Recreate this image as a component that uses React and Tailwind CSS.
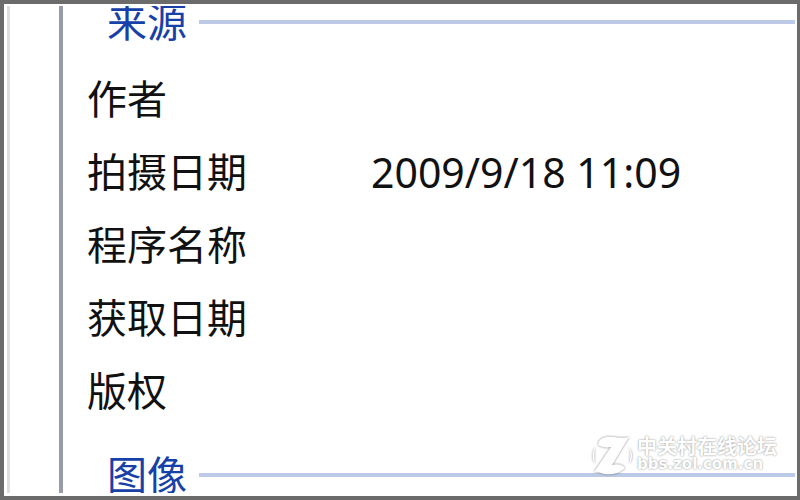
import React from 'react';

const rows = [
    { label: '作者', value: '' },
    { label: '拍摄日期', value: '2009/9/18 11:09' },
    { label: '程序名称', value: '' },
    { label: '获取日期', value: '' },
    { label: '版权', value: '' },
];

const SectionHeader = ({ title }) => (
    <div className="flex items-center gap-3 pl-11">
        <h2 className="pb-1 text-[40px] leading-7 font-normal text-[#1740a8] font-['Noto_Sans_CJK_SC',sans-serif]">{title}</h2>
        <div className="h-1 flex-1 bg-[#bccae8]"></div>
    </div>
);

const Watermark = () => (
    <div className="absolute right-5 bottom-5 flex items-center gap-1 text-white">
        <svg viewBox="0 0 44 44" className="w-11 h-11 drop-shadow-[0_0_1px_rgba(0,0,0,0.5)]" fill="white">
            <path d="M9 13 C10 5 17 4 25 5 C31 6 36 6 40 5 L23 33 C29 31 34 33 36 36 C30 42 22 43 15 42 C11 41 8 39 5 40 L22 15 C17 16 12 15 9 13 Z" />
            <path d="M6 15 C3 20 3 26 6 32 C5 26 5 20 6 15 Z M40 15 C44 21 44 27 40 32 C42 26 42 20 40 15 Z" />
        </svg>
        <div className="[text-shadow:0_0_2px_rgba(0,0,0,0.5)] font-bold">
            <p className="text-[20px] leading-5 font-['Noto_Sans_CJK_SC',sans-serif]">中关村在线论坛</p>
            <p className="text-[15px] leading-4 font-['DejaVu_Sans',sans-serif]">bbs.zol.com.cn</p>
        </div>
    </div>
);

const App = () => (
    <div className="relative min-h-screen flex flex-col bg-white border-4 border-r-[3px] border-[#6b6b6b]">
        <div className="flex-1 mt-0.5 mb-[3px] ml-[3px] mr-0.5 flex overflow-hidden border-l-[3px] border-[#dedede]">
            <div className="flex-1 ml-[49px] border-l-4 border-[#979ca6]">
                <SectionHeader title="来源" />
                <table className="w-full my-6 ml-6 text-left text-[#111111]">
                    <tbody>
                        {rows.map(row => (
                            <tr key={row.label} className="h-[73px]">
                                <th scope="row" className="w-[284px] p-0 pb-1 text-[40px] leading-10 font-normal font-['Noto_Sans_CJK_SC',sans-serif]">
                                    {row.label}
                                </th>
                                <td className="p-0 text-[41px] leading-10 font-['Noto_Sans',sans-serif]">{row.value}</td>
                            </tr>
                        ))}
                    </tbody>
                </table>
                <div className="pt-2">
                    <SectionHeader title="图像" />
                </div>
            </div>
        </div>
        <Watermark />
    </div>
);

export default App;
